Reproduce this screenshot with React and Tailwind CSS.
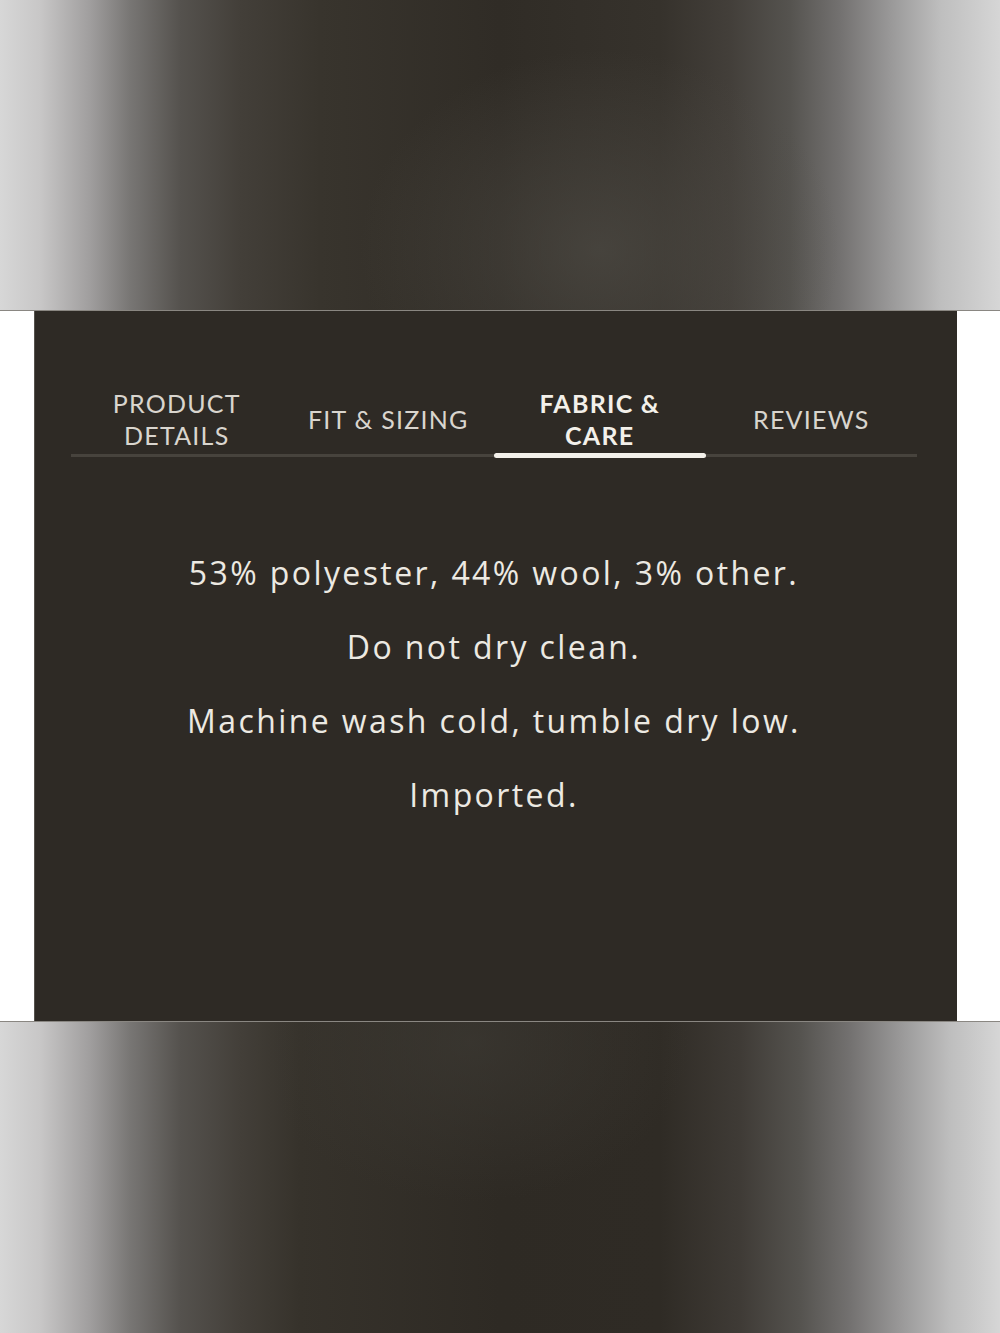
import React, { useState } from "react";

const tabs = [
  { id: "details", label: ["PRODUCT", "DETAILS"] },
  { id: "fit", label: ["FIT & SIZING"] },
  { id: "fabric", label: ["FABRIC &", "CARE"] },
  { id: "reviews", label: ["REVIEWS"] },
];

const fabricCare = [
  "53% polyester, 44% wool, 3% other.",
  "Do not dry clean.",
  "Machine wash cold, tumble dry low.",
  "Imported.",
];

const App = () => {
  const [active, setActive] = useState("fabric");

  return (
    <div className="w-full h-[1333px] flex flex-col bg-white font-['Lato','Open_Sans',sans-serif]">
      {/* blurred backdrop above the panel */}
      <div className="h-[311px] shrink-0 border-b border-[#8a8782] bg-[image:radial-gradient(ellipse_240px_200px_at_600px_250px,rgba(78,75,69,0.7),rgba(78,75,69,0)_100%),linear-gradient(to_right,#d7d7d7_0%,#c8c7c7_4%,#a09e9e_9%,#787674_13%,#55524e_18%,#433f39_24%,#38342d_32%,#302c26_50%,#36322c_66%,#433f3a_73%,#55534f_79%,#737170_84%,#999898_89%,#bebebe_94%,#d6d6d6_100%)]" />

      {/* tab panel */}
      <div className="h-[710px] shrink-0 bg-white">
        <div className="ml-[34px] w-[923px] h-full bg-[#2e2a25] border-l border-[#55524d] pl-[36px] pr-[40px] pt-[72px]">
          <div className="flex border-b-[3px] border-[#47433d]">
            {tabs.map((tab) => {
              const isActive = tab.id === active;
              return (
                <button
                  key={tab.id}
                  onClick={() => setActive(tab.id)}
                  className={
                    "relative flex-1 h-[71px] flex flex-col items-center justify-center text-center text-[25px] leading-[32px] tracking-[0.05em] " +
                    (isActive ? "font-bold text-[#f3f0ea]" : "font-normal text-[#d9d5ce]")
                  }
                >
                  {tab.label.map((line) => (
                    <span key={line}>{line}</span>
                  ))}
                  {isActive && (
                    <span className="absolute left-0 right-0 -bottom-[4px] h-[5px] bg-[#f3f0ea] rounded-full" />
                  )}
                </button>
              );
            })}
          </div>

          <div className="mt-[79px] flex flex-col items-center font-['Open_Sans','Lato',sans-serif] text-[32px] leading-[74px] tracking-[0.075em] text-[#ece9e2]">
            {fabricCare.map((line) => (
              <p key={line}>{line}</p>
            ))}
          </div>
        </div>
      </div>

      {/* blurred backdrop below the panel */}
      <div className="flex-1 border-t border-[#8a8782] bg-[image:radial-gradient(ellipse_220px_160px_at_470px_20px,rgba(60,57,51,0.7),rgba(60,57,51,0)_100%),linear-gradient(to_right,#d7d7d7_0%,#c8c7c7_4%,#a09e9e_9%,#787674_13%,#55524e_18%,#433f39_24%,#36322b_30%,#2e2a24_50%,#2f2b25_66%,#3f3b36_74%,#55534f_80%,#737170_85%,#999898_90%,#bebebe_95%,#d6d6d6_100%)]" />
    </div>
  );
};

export default App;
